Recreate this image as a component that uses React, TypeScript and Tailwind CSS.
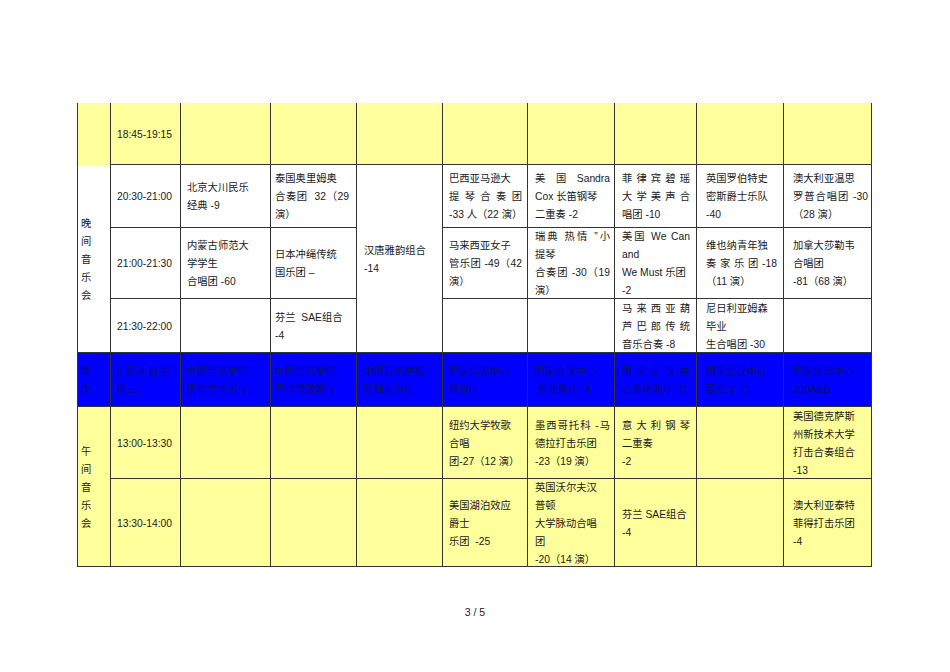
type Cell = {
  c: number;
  r: number;
  rs?: number;
  lines: string[];
  noBottom?: boolean;
};

// 每列的内边距（列宽不同，原表的文字起点也不一样）
const PADS = [
  'pl-[3px] pr-[2px]',
  'pl-[6px] pr-[10px]',
  'pl-[6px] pr-[6px]',
  'pl-[4px] pr-[7px]',
  'pl-[7px] pr-[5px]',
  'pl-[6px] pr-[5px]',
  'pl-[7px] pr-[4px]',
  'pl-[7px] pr-[6px]',
  'pl-[9px] pr-[6px]',
  'pl-[9px] pr-[3px]',
];

const COL_START = [
  'col-start-1',
  'col-start-2',
  'col-start-3',
  'col-start-4',
  'col-start-5',
  'col-start-6',
  'col-start-7',
  'col-start-8',
  'col-start-9',
  'col-start-10',
];

const ROW_START = ['row-start-1', 'row-start-2', 'row-start-3', 'row-start-4', 'row-start-5', 'row-start-6', 'row-start-7'];

function rowBg(r: number) {
  if (r === 5) return 'bg-[#0000ff] text-[#0c0c7a]';
  if (r === 1 || r >= 6) return 'bg-[#ffff9c] text-[#1a1a1a]';
  return 'bg-white text-[#1a1a1a]';
}

const cells: Cell[] = [
  { c: 1, r: 1, lines: [], noBottom: true },
  { c: 2, r: 1, lines: ['18:45-19:15'] },
  { c: 3, r: 1, lines: [] },
  { c: 4, r: 1, lines: [] },
  { c: 5, r: 1, lines: [] },
  { c: 6, r: 1, lines: [] },
  { c: 7, r: 1, lines: [] },
  { c: 8, r: 1, lines: [] },
  { c: 9, r: 1, lines: [] },
  { c: 10, r: 1, lines: [] },

  { c: 1, r: 2, rs: 3, lines: ['晚', '间', '音', '乐', '会'] },
  { c: 2, r: 2, lines: ['20:30-21:00'] },
  { c: 3, r: 2, lines: ['北京大川民乐', '经典 -9'] },
  { c: 4, r: 2, lines: ['泰国奥里姆奥', '|合奏团  32（29', '演）'] },
  { c: 5, r: 2, rs: 3, lines: ['汉唐雅韵组合', '-14'] },
  { c: 6, r: 2, lines: ['巴西亚马逊大', '|提 琴 合 奏 团', '|-33 人（22 演）'] },
  { c: 7, r: 2, lines: ['|美 国 Sandra', 'Cox 长笛钢琴', '二重奏 -2'] },
  { c: 8, r: 2, lines: ['|菲 律 宾 碧 瑶', '|大 学 美 声 合', '唱团 -10'] },
  { c: 9, r: 2, lines: ['英国罗伯特史', '密斯爵士乐队', '-40'] },
  { c: 10, r: 2, lines: ['澳大利亚温思', '|罗普合唱团 -30', '（28 演）'] },

  { c: 2, r: 3, lines: ['21:00-21:30'] },
  { c: 3, r: 3, lines: ['内蒙古师范大', '学学生', '合唱团 -60'] },
  { c: 4, r: 3, lines: ['日本冲绳传统', '国乐团 –'] },
  { c: 6, r: 3, lines: ['马来西亚女子', '|管乐团 -49（42', '演）'] },
  { c: 7, r: 3, lines: ['|瑞典 热情 ”小', '提琴', '|合奏团 -30（19', '演）'] },
  { c: 8, r: 3, lines: ['|美国 We Can', 'and', 'We Must 乐团', '-2'] },
  { c: 9, r: 3, lines: ['维也纳青年独', '|奏 家 乐 团 -18', '（11 演）'] },
  { c: 10, r: 3, lines: ['加拿大莎勒韦', '合唱团', '-81（68 演）'] },

  { c: 2, r: 4, lines: ['21:30-22:00'] },
  { c: 3, r: 4, lines: [] },
  { c: 4, r: 4, lines: ['芬兰  SAE组合', '-4'] },
  { c: 6, r: 4, lines: [] },
  { c: 7, r: 4, lines: [] },
  { c: 8, r: 4, lines: ['|马 来 西 亚 葫', '|芦 巴 郎 传 统', '音乐合奏 -8'] },
  { c: 9, r: 4, lines: ['尼日利亚姆森', '毕业', '生合唱团 -30'] },
  { c: 10, r: 4, lines: [] },

  { c: 1, r: 5, lines: ['场', '次'] },
  { c: 2, r: 5, lines: ['|8 月 4 日星', '期三'] },
  { c: 3, r: 5, lines: ['中国音乐学院', '国音堂音乐厅'] },
  { c: 4, r: 5, lines: ['中国音乐学院', '国音堂歌剧厅'] },
  { c: 5, r: 5, lines: ['中国音乐学院', '阶梯音乐厅'] },
  { c: 6, r: 5, lines: ['国家会议中心', '报告厅'] },
  { c: 7, r: 5, lines: ['国家会议中心', ' 多功能厅  A'] },
  { c: 8, r: 5, lines: ['|国 家 会 议 中', '心多功能厅  C'] },
  { c: 9, r: 5, lines: ['国家会议中心', '宴会厅  C'] },
  { c: 10, r: 5, lines: ['国家会议中心', '309A&B'] },

  { c: 1, r: 6, rs: 2, lines: ['午', '间', '音', '乐', '会'] },
  { c: 2, r: 6, lines: ['13:00-13:30'] },
  { c: 3, r: 6, lines: [] },
  { c: 4, r: 6, lines: [] },
  { c: 5, r: 6, lines: [] },
  { c: 6, r: 6, lines: ['纽约大学牧歌', '合唱', '团-27（12 演）'] },
  { c: 7, r: 6, lines: ['|墨西哥托科 -马', '德拉打击乐团', '-23（19 演）'] },
  { c: 8, r: 6, lines: ['|意 大 利 钢 琴', '二重奏', '-2'] },
  { c: 9, r: 6, lines: [] },
  { c: 10, r: 6, lines: ['美国德克萨斯', '州新技术大学', '打击合奏组合', '-13'] },

  { c: 2, r: 7, lines: ['13:30-14:00'] },
  { c: 3, r: 7, lines: [] },
  { c: 4, r: 7, lines: [] },
  { c: 5, r: 7, lines: [] },
  { c: 6, r: 7, lines: ['美国湖泊效应', '爵士', '乐团  -25'] },
  { c: 7, r: 7, lines: ['英国沃尔夫汉', '普顿', '大学脉动合唱', '团', '-20（14 演）'] },
  { c: 8, r: 7, lines: ['芬兰 SAE组合', '-4'] },
  { c: 9, r: 7, lines: [] },
  { c: 10, r: 7, lines: ['澳大利亚泰特', '菲得打击乐团', '-4'] },
];

function spanClass(rs?: number) {
  if (rs === 3) return 'row-span-3';
  if (rs === 2) return 'row-span-2';
  return '';
}

function TableCell({ cell }: { cell: Cell }) {
  return (
    <div
      className={`${COL_START[cell.c - 1]} ${ROW_START[cell.r - 1]} ${spanClass(cell.rs)} ${rowBg(cell.r)} ${
        PADS[cell.c - 1]
      } flex min-h-0 flex-col justify-center border-r border-[#333] ${cell.noBottom ? '' : 'border-b'} ${
        cell.c === 1 ? 'border-l' : ''
      } pt-[2px] leading-[18px]`}
    >
      {cell.lines.map((line, i) =>
        line.startsWith('|') ? (
          <div key={i} className="whitespace-pre text-justify [text-align-last:justify]">
            {line.slice(1)}
          </div>
        ) : (
          <div key={i} className="whitespace-pre">
            {line}
          </div>
        )
      )}
    </div>
  );
}

export default function App() {
  return (
    <div className="h-[672px] w-[950px] overflow-hidden bg-white [font-family:'Liberation_Sans','Noto_Sans_CJK_SC',sans-serif] text-[10.3px]">
      <div className="pl-[77px] pt-[103px]">
        <div className="grid w-[795px] grid-cols-[34px_70px_90px_86px_86px_85px_87px_82px_87px_88px] grid-rows-[62px_63px_71px_54px_54px_72px_88px]">
          {cells.map((cell) => (
            <TableCell key={`${cell.r}-${cell.c}`} cell={cell} />
          ))}
        </div>
      </div>
      <div className="mt-[37px] text-center text-[10.5px] leading-[16px] text-[#222]">3 / 5</div>
    </div>
  );
}
